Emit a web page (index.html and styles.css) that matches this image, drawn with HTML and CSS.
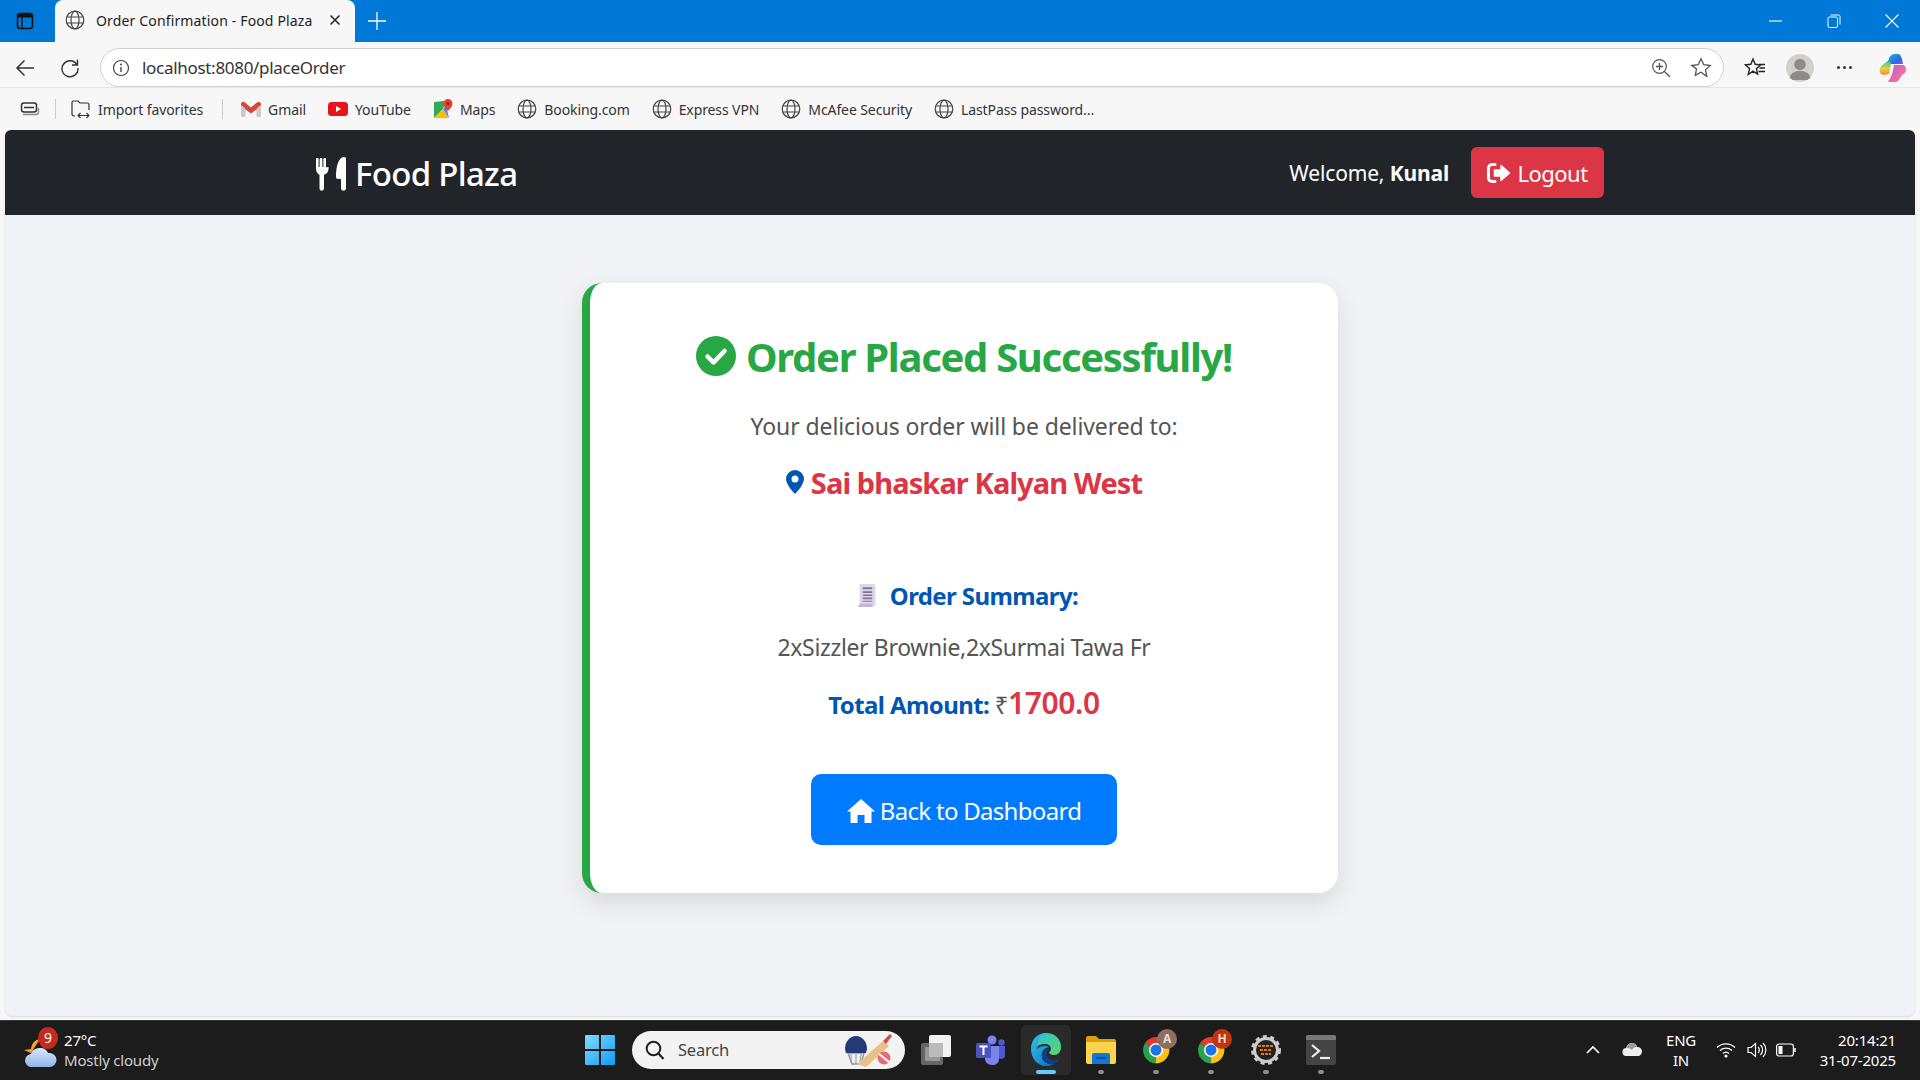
FILE: index.html
```html
<!DOCTYPE html>
<html lang="en">
  <head>
    <title>Order Confirmation - Food Plaza</title>
    <meta charset="utf-8">
    <link rel="stylesheet" href="styles.css">
  </head>

  <body>
    <svg class="defs" width="0" height="0">
      <defs>
        <symbol id="globe" viewBox="0 0 20 20">
          <g fill="none" stroke="#444" stroke-width="1.2">
            <circle cx="10" cy="10" r="8.8"/>
            <ellipse cx="10" cy="10" rx="4" ry="8.8"/>
            <path d="M1.6 7h16.8M1.6 13h16.8"/>
          </g>
        </symbol>
        <symbol id="chrome" viewBox="0 0 30 30">
          <path d="M15 15 L4 8 A13.5 13.5 0 0 1 27 9 L15 9Z" fill="#e33b2e"/>
          <path d="M15 15 L15 28.5 A13.5 13.5 0 0 0 27 9 L15 9Z" fill="#fbc116"/>
          <path d="M15 15 L4 8 A13.5 13.5 0 0 0 15 28.5Z" fill="#2ba14b"/>
          <circle cx="15" cy="15" r="7" fill="#fff"/>
          <circle cx="15" cy="15" r="5.5" fill="#1a73e8"/>
        </symbol>
      </defs>
    </svg>

    <div class="tabstrip">
      <button class="strip-btn">
        <svg width="18" height="18" viewBox="0 0 18 18"><rect x="1.5" y="1.5" width="15" height="15" rx="2.5" fill="none" stroke="#111" stroke-width="1.6"/><path d="M2 2h14v3.5H2z" fill="#111"/><path d="M6 5v11" stroke="#111" stroke-width="1.4"/></svg>
      </button>
      <div class="tab">
        <svg width="20" height="20"><use href="#globe"/></svg>
        <span class="tab-title">Order Confirmation - Food Plaza</span>
        <svg class="tab-close" width="12" height="12" viewBox="0 0 12 12"><path d="M1.5 1.5l9 9M10.5 1.5l-9 9" stroke="#222" stroke-width="1.5"/></svg>
      </div>
      <svg class="new-tab" width="18" height="18" viewBox="0 0 18 18"><path d="M9 0v18M0 9h18" stroke="#fff" stroke-width="1.3"/></svg>
      <div class="win-controls">
        <svg width="14" height="14" viewBox="0 0 14 14"><path d="M0 7h13" stroke="#fff" stroke-width="1.1"/></svg>
        <svg width="14" height="14" viewBox="0 0 14 14"><rect x="1" y="3" width="9.5" height="10.5" rx="1.5" fill="none" stroke="#fff"/><path d="M3.5 1h8a1.5 1.5 0 0 1 1.500 1.500v8" fill="none" stroke="#fff"/></svg>
        <svg width="14" height="14" viewBox="0 0 14 14"><path d="M.5.5l13 13M13.500.5l-13 13" stroke="#fff" stroke-width="1.1"/></svg>
      </div>
    </div>

    <div class="toolbar">
      <svg class="tool-back" width="20" height="18" viewBox="0 0 20 18"><path d="M19 9H2M9.500 1.500L2 9l7.500 7.500" fill="none" stroke="#333" stroke-width="1.5"/></svg>
      <svg class="tool-reload" width="20" height="20" viewBox="0 0 20 20"><path d="M16.800 6.500A8 8 0 1 0 18 10M17.500 1.500v5.500h-5.500" fill="none" stroke="#333" stroke-width="1.400"/></svg>
      <div class="addressbar">
        <svg width="18" height="18" viewBox="0 0 18 18"><circle cx="9" cy="9" r="7.500" fill="none" stroke="#444" stroke-width="1.200"/><path d="M9 8v5" stroke="#444" stroke-width="1.400"/><circle cx="9" cy="5.500" r="1" fill="#444"/></svg>
        <span class="url">localhost:8080/placeOrder</span>
        <svg class="zoom-icon" width="20" height="20" viewBox="0 0 20 20"><circle cx="8.500" cy="8.500" r="6.800" fill="none" stroke="#555" stroke-width="1.200"/><path d="M13.500 13.500L19 19M8.500 5v7M5 8.500h7" stroke="#555" stroke-width="1.300"/></svg>
        <svg class="star-icon" width="22" height="22" viewBox="0 0 22 22"><path d="M11 1.800l2.800 5.900 6.400.8-4.700 4.400 1.200 6.400L11 15.200l-5.700 3.100 1.200-6.400L1.800 8.500l6.400-.8z" fill="none" stroke="#555" stroke-width="1.300"/></svg>
      </div>
      <svg class="tool-favs" width="22" height="22" viewBox="0 0 22 22"><path d="M9 2l2.200 5.300 5.300.6-4 3.700 1.100 5.500L9 14.200l-4.700 3.300 1.200-5.900-4-3.700 5.300-.6z" fill="none" stroke="#222" stroke-width="1.400"/><path d="M15 7.500h6M15.500 11h5.500M14.500 14.500h6.500" stroke="#222" stroke-width="1.400"/></svg>
      <div class="avatar">
        <svg width="28" height="28" viewBox="0 0 28 28"><circle cx="14" cy="10.500" r="5.800" fill="#8e8c88"/><path d="M3.500 26c0-6.500 4.500-9 10.500-9s10.500 2.500 10.500 9z" fill="#8e8c88"/></svg>
      </div>
      <div class="more-dots"><i></i><i></i><i></i></div>
      <svg class="copilot" width="28" height="30" viewBox="0 0 28 30">
        <defs>
          <linearGradient id="cpA" x1="0" y1="0" x2="1" y2="1"><stop offset="0" stop-color="#19b5e8"/><stop offset=".6" stop-color="#2b6fe0"/><stop offset="1" stop-color="#7a4fd8"/></linearGradient>
          <linearGradient id="cpB" x1="0" y1="0" x2="0" y2="1"><stop offset="0" stop-color="#36c6a0"/><stop offset=".55" stop-color="#e9d03c"/><stop offset="1" stop-color="#f08a3c"/></linearGradient>
          <linearGradient id="cpC" x1="0" y1="0" x2="1" y2="1"><stop offset="0" stop-color="#b05fd8"/><stop offset=".6" stop-color="#ec6ba8"/><stop offset="1" stop-color="#f57a3c"/></linearGradient>
        </defs>
        <path d="M9 9c1-5 3-8 7-8h3c2 0 3 2 4 5l1 5H14c-3 0-5 0-5-2z" fill="url(#cpA)"/>
        <path d="M9 8L6 10C2 13 0 15 1 19c.5 2 2 3 4 3l5-1 2-10c0-2-2-3-3-3z" fill="url(#cpB)"/>
        <path d="M15 12h8c3 0 4 2 4 5 0 2-2 4-4 5l-4 6c-1 1-2 1-4 1h-5c-1 0-1-1 0-2 3-3 4-10 5-15z" fill="url(#cpC)"/>
      </svg>
    </div>

    <div class="bookmarks">
      <svg class="bm-first" width="20" height="18" viewBox="0 0 20 18"><rect x="1.500" y="3" width="15" height="9" rx="2.500" fill="none" stroke="#333" stroke-width="1.500"/><path d="M4 7.500h10" stroke="#333" stroke-width="1.500"/><path d="M3 14.500h13a2.500 2.500 0 0 0 2.500-2.500V8" fill="none" stroke="#888" stroke-width="1.300"/></svg>
      <i class="bm-sep"></i>
      <div class="bm bm-import">
        <svg width="20" height="20" viewBox="0 0 20 20"><path d="M4 17H3a2 2 0 0 1-2-2V3.500A1.500 1.500 0 0 1 2.500 2H7l2 2h7a2 2 0 0 1 2 2v5" fill="none" stroke="#333" stroke-width="1.200"/><path d="M7 16.500h11M9.500 14l-2.500 2.500L9.500 19M15.500 14l2.500 2.500-2.500 2.500" fill="none" stroke="#333" stroke-width="1.100"/></svg>
        <span>Import favorites</span>
      </div>
      <i class="bm-sep bm-sep2"></i>
      <div class="bm bm-gmail">
        <svg width="20" height="16" viewBox="0 0 20 16"><path d="M1 15V3l9 7 9-7v12h-4V7l-5 4-5-4v8z" fill="#ddd"/><path d="M0 3.500C0 1 2.500 0 4 1.500l6 5 6-5C17.500 0 20 1 20 3.500V5l-10 7.500L0 5z" fill="#d8453b"/><path d="M0 4v10.500c0 .8.500 1.500 1.500 1.500H4V7z" fill="#c9c9c9"/><path d="M20 4v10.500c0 .8-.500 1.500-1.500 1.500H16V7z" fill="#c9c9c9"/></svg>
        <span>Gmail</span>
      </div>
      <div class="bm">
        <svg width="20" height="14" viewBox="0 0 20 14"><rect width="20" height="14" rx="3.500" fill="#e8141c"/><path d="M8 4l5.200 3L8 10z" fill="#fff"/></svg>
        <span>YouTube</span>
      </div>
      <div class="bm">
        <svg width="20" height="20" viewBox="0 0 20 20"><path d="M1 3l9-1v8l-9 9z" fill="#34a853"/><path d="M1 19l9-9 6 9z" fill="#fbbc04"/><path d="M10 2l3 0-3 8z" fill="#4285f4"/><path d="M10 10l3-3 3 12z" fill="#4285f4"/><path d="M15 0a4.500 4.500 0 0 1 4.500 4.500C19.500 8 15 12 15 12s-4.500-4-4.500-7.500A4.500 4.500 0 0 1 15 0z" fill="#e5412f"/><circle cx="15" cy="4.500" r="1.500" fill="#8c2218"/></svg>
        <span>Maps</span>
      </div>
      <div class="bm"><svg width="20" height="20"><use href="#globe"/></svg><span>Booking.com</span></div>
      <div class="bm"><svg width="20" height="20"><use href="#globe"/></svg><span>Express VPN</span></div>
      <div class="bm"><svg width="20" height="20"><use href="#globe"/></svg><span>McAfee Security</span></div>
      <div class="bm"><svg width="20" height="20"><use href="#globe"/></svg><span>LastPass password...</span></div>
    </div>

    <div class="page">
      <nav class="navbar">
        <div class="nav-inner">
          <a class="brand">
            <svg width="30" height="34" viewBox="0 0 30 34"><path d="M0 2c0-1.500 2.600-1.500 2.600 0v8h1V2c0-1.500 2.800-1.500 2.800 0v8h1V2c0-1.500 2.600-1.500 2.600 0v2h.000v6c0 1 2.500 0 2.500 0v2c0 3-2 5-4.500 5.700V31c0 3.500-4.500 3.500-4.500 0V17.700C2 17 0 15 0 12z" fill="#fff"/><path d="M30 1.500V31c0 3.500-5 3.500-5 0v-9h-3c-1.200 0-2-.7-2-2C20 10 22 1 27.500 0 29 -.2 30 .5 30 1.500z" fill="#fff"/></svg>
            <span>Food Plaza</span>
          </a>
          <div class="nav-right">
            <span class="welcome">Welcome, <b>Kunal</b></span>
            <a class="btn-logout">
              <svg width="24" height="20" viewBox="0 0 24 20"><path d="M8 1.500H5A3.500 3.500 0 0 0 1.500 5v10A3.500 3.500 0 0 0 5 18.500h3" fill="none" stroke="#fff" stroke-width="3" stroke-linecap="round"/><path d="M14 2.500l8.500 7.500L14 17.500V13H7.500V7H14z" fill="#fff" stroke="#fff" stroke-width="1.500" stroke-linejoin="round"/></svg>
              <span>Logout</span>
            </a>
          </div>
        </div>
      </nav>

      <main class="main">
        <section class="card">
          <h2 class="card-title">
            <svg width="40" height="40" viewBox="0 0 40 40"><circle cx="20" cy="20" r="20" fill="#28a745"/><path d="M11.500 20.500l6 6 11-11.500" fill="none" stroke="#fff" stroke-width="4.500" stroke-linecap="round" stroke-linejoin="round"/></svg>
            <span>Order Placed Successfully!</span>
          </h2>
          <p class="lead">Your delicious order will be delivered to:</p>
          <p class="address">
            <svg width="18" height="24" viewBox="0 0 18 24"><path fill-rule="evenodd" d="M9 0a9 9 0 0 1 9 9c0 4.500-5.500 11.500-9 15C5.500 20.500 0 13.500 0 9a9 9 0 0 1 9-9zm0 5.500a3.500 3.500 0 1 0 0 7 3.500 3.500 0 0 0 0-7z" fill="#0056b3"/></svg>
            <span>Sai bhaskar Kalyan West</span>
          </p>
          <p class="summary">
            <svg width="22" height="25" viewBox="0 0 20 24"><path d="M3 1h15v19c0 2-1 3-3 3H1c1-1 2-2 2-3z" fill="#dcd6e8"/><path d="M1 23c1-1 2-2 2-3h12c0 1 0 2-1 3z" fill="#c2b4dc"/><path d="M6 4h9v2H6zM6 8h9v1.500H6zM6 11h9v1.500H6zM6 14h9v1.500H6zM6 17h9v1H6z" fill="#7d7890"/></svg>
            <span>Order Summary:</span>
          </p>
          <p class="items">2xSizzler Brownie,2xSurmai Tawa Fr</p>
          <p class="total"><b>Total Amount:</b> <span class="rupee">₹</span><b class="amount">1700.0</b></p>
          <a class="btn-back">
            <svg width="28" height="24" viewBox="0 0 28 24"><path d="M14 0l14 12.500h-3.500V24h-7v-8h-7v8h-7V12.500H0z" fill="#fff"/></svg>
            <span>Back to Dashboard</span>
          </a>
        </section>
      </main>
    </div>

    <footer class="taskbar">
      <div class="weather">
        <svg width="34" height="38" viewBox="0 0 34 38">
          <defs><linearGradient id="cloud" x1="0" y1="0" x2="0" y2="1"><stop offset="0" stop-color="#dbe7fb"/><stop offset="1" stop-color="#8fb4e8"/></linearGradient></defs>
          <path d="M16 8a10 10 0 0 0-9 10l-7 1 7 3z" fill="#f0a22e"/>
          <path d="M8 36a6.500 6.500 0 0 1-1-13c1-4 5-6 9-6 4 0 7 2 8 5h1a7 7 0 0 1 1 14z" fill="url(#cloud)"/>
        </svg>
        <span class="weather-badge">9</span>
        <div class="weather-text">
          <span class="temp">27°C</span>
          <span class="cond">Mostly cloudy</span>
        </div>
      </div>

      <div class="task-center">
        <svg class="win-logo" width="30" height="30" viewBox="0 0 30 30">
          <defs><linearGradient id="winG" x1="0" y1="0" x2="1" y2="1"><stop offset="0" stop-color="#7fdcf7"/><stop offset="1" stop-color="#0f9cf5"/></linearGradient></defs>
          <path d="M0 1a1 1 0 0 1 1-1h13v14H0zM16 0h13a1 1 0 0 1 1 1v13H16zM0 16h14v14H1a1 1 0 0 1-1-1zM16 16h14v13a1 1 0 0 1-1 1H16z" fill="url(#winG)"/>
        </svg>
        <div class="search">
          <svg width="20" height="20" viewBox="0 0 20 20"><circle cx="8.500" cy="8.500" r="6.800" fill="none" stroke="#222" stroke-width="2"/><path d="M13.500 13.500L18.500 19" stroke="#222" stroke-width="2.200"/></svg>
          <span>Search</span>
          <svg class="search-art" width="50" height="34" viewBox="0 0 50 34">
            <path d="M5 20h16l-3 11H9z" fill="#eee" stroke="#999" stroke-width="1.500"/>
            <path d="M8 21v9M13 21v10M18 21l-1 9" stroke="#999"/>
            <path d="M2 16a11 13 0 0 1 22 0l-1 4H3z" fill="#243a78"/>
            <path d="M14 31L40 8l6 5-23 21z" fill="#e8c08a"/>
            <path d="M40 8l7-7 2 2-6 8z" fill="#d24a4a"/>
            <circle cx="41" cy="25" r="6.500" fill="#e86a78"/>
            <path d="M36 21l10 8" stroke="#fff" stroke-width="2"/>
          </svg>
        </div>
        <div class="task-icon">
          <svg width="30" height="30" viewBox="0 0 30 30"><rect y="8" width="22" height="22" rx="2" fill="#666"/><rect x="4" y="12" width="15" height="14" rx="1" fill="#999"/><rect x="8" width="22" height="22" rx="2" fill="#f2f2f2"/><rect x="8" y="8" width="14" height="14" fill="#bbb"/></svg>
        </div>
        <div class="task-icon">
          <svg width="30" height="30" viewBox="0 0 30 30"><circle cx="16" cy="5" r="4.500" fill="#7b83eb"/><circle cx="25.500" cy="7.500" r="3.200" fill="#5059c9"/><path d="M21 11h8v9c0 3-2 4-4 4-2 0-4-1-4-4z" fill="#5059c9"/><path d="M9 11h14v13c0 4-3 6-7 6s-7-3-7-6z" fill="#7b83eb"/><rect y="8" width="15" height="15" rx="1.500" fill="#4b53bc"/><path d="M3.500 11.500h8M7.500 11.500v8.500" stroke="#fff" stroke-width="2"/></svg>
        </div>
        <div class="task-icon task-active">
          <svg width="30" height="34" viewBox="0 0 30 34">
            <defs>
              <linearGradient id="edgeA" x1="0" y1="0" x2="1" y2="1"><stop offset="0" stop-color="#33c4e8"/><stop offset="1" stop-color="#0a6ec2"/></linearGradient>
              <linearGradient id="edgeB" x1="0" y1="0" x2="1" y2="1"><stop offset="0" stop-color="#2cc0d8"/><stop offset="1" stop-color="#5fd668"/></linearGradient>
            </defs>
            <path d="M15 0C7 0 0 6 0 16c0 9 6 17 15 17 3 0 6-1 8-2-6 1-11-2-12-7-1-5 2-9 7-10-2-2-8-2-12 2 1-8 8-11 14-9z" fill="url(#edgeA)"/>
            <path d="M15 0c9 0 15 6 15 14 0 5-3 8-7 8-3 0-5-1-5-3 3-1 3-7-3-8-4-.5-8 1-9 3C7 6 10 0 15 0z" fill="url(#edgeB)"/>
            <path d="M11 24c1 5 6 8 12 7 2-1 4-3 5-5-6 3-10 1-12-3-1-2-1-5 2-8-5 1-8 5-7 9z" fill="#0f3f8c"/>
          </svg>
          <i class="run run-active"></i>
        </div>
        <div class="task-icon">
          <svg width="30" height="28" viewBox="0 0 30 28"><path d="M0 2a2 2 0 0 1 2-2h8l3 3h15a2 2 0 0 1 2 2v4H0z" fill="#d9a10e"/><path d="M0 6h30v20a2 2 0 0 1-2 2H2a2 2 0 0 1-2-2z" fill="#ffd34d"/><path d="M6 19a2 2 0 0 1 2-2h14a2 2 0 0 1 2 2v9H6z" fill="#0f78d4"/><path d="M10 22h10" stroke="#0a4f96" stroke-width="2"/></svg>
          <i class="run"></i>
        </div>
        <div class="task-icon">
          <svg class="ic-chrome" width="30" height="30"><use href="#chrome"/></svg>
          <span class="chrome-badge badge-a">A</span>
          <i class="run"></i>
        </div>
        <div class="task-icon">
          <svg class="ic-chrome" width="30" height="30"><use href="#chrome"/></svg>
          <span class="chrome-badge badge-h">H</span>
          <i class="run"></i>
        </div>
        <div class="task-icon">
          <svg width="30" height="30" viewBox="0 0 30 30"><circle cx="15" cy="15" r="11.500" fill="#222" stroke="#ccc" stroke-width="3"/><circle cx="15" cy="15" r="13.500" fill="none" stroke="#ccc" stroke-width="3" stroke-dasharray="4 3.500"/><path d="M7 11h16M9 15h12M10 19h10" stroke="#e07b10" stroke-width="2" stroke-dasharray="3 1"/></svg>
          <i class="run"></i>
        </div>
        <div class="task-icon">
          <svg width="30" height="30" viewBox="0 0 30 30"><rect width="30" height="30" rx="2" fill="#444"/><path d="M0 2a2 2 0 0 1 2-2h26a2 2 0 0 1 2 2v3H0z" fill="#777"/><path d="M6 10l7 6-7 6" fill="none" stroke="#eee" stroke-width="2.200"/><path d="M14 23h10" stroke="#eee" stroke-width="2.200"/></svg>
          <i class="run"></i>
        </div>
      </div>

      <div class="tray">
        <svg class="tray-chevron" width="14" height="9" viewBox="0 0 14 9"><path d="M1 8l6-6 6 6" fill="none" stroke="#fff" stroke-width="1.600"/></svg>
        <svg class="tray-cloud" width="20" height="14" viewBox="0 0 20 14"><path d="M5 13a4 4 0 0 1-1-8c1-3 3-5 6-5 2.500 0 4.500 1.500 5 4 3 0 5 2 5 4.500 0 2.500-2 4.500-4 4.500z" fill="#eee"/><path d="M4 5c1-3 3-5 6-5 2.500 0 4.500 1.500 5 4-3 0-4 1-5 3-2-2-4-2-6-2z" fill="#9a9a9a"/></svg>
        <div class="lang"><span>ENG</span><span>IN</span></div>
        <svg class="tray-wifi" width="20" height="16" viewBox="0 0 20 16"><g fill="none" stroke="#fff" stroke-width="1.300"><path d="M1 5.500a13 13 0 0 1 18 0"/><path d="M4 8.500a9 9 0 0 1 12 0"/><path d="M7 11.500a4.500 4.500 0 0 1 6 0"/></g><circle cx="10" cy="14" r="1.600" fill="#fff"/></svg>
        <svg class="tray-vol" width="20" height="16" viewBox="0 0 20 16"><g fill="none" stroke="#fff" stroke-width="1.200"><path d="M1 5.500h3L8.500 1.500v13L4 10.500H1z"/><path d="M11 5a4 4 0 0 1 0 6M13.500 3a7 7 0 0 1 0 10M16 1a10 10 0 0 1 0 14"/></g></svg>
        <svg class="tray-batt" width="20" height="14" viewBox="0 0 20 14"><rect x=".6" y="1" width="16.800" height="12" rx="2.500" fill="none" stroke="#fff" stroke-width="1.200"/><rect x="2.500" y="3" width="4" height="8" fill="#fff"/><path d="M19 5v4" stroke="#fff" stroke-width="1.500"/></svg>
        <div class="clock"><span>20:14:21</span><span>31-07-2025</span></div>
      </div>
    </footer>
  </body>
</html>
```

FILE: styles.css
```css
* {
  box-sizing: border-box;
}
html, body {
  height: 100vh;
  margin: 0;
  overflow: hidden;
}
body {
  display: flex;
  flex-direction: column;
  background: #f7f7f7;
  font-family: "Noto Sans", "Open Sans", sans-serif;
}
.defs {
  position: absolute;
}
p, h2 {
  margin: 0;
}

/* browser chrome */
.tabstrip {
  display: flex;
  align-items: center;
  height: 42px;
  flex: none;
  background: #0078d7;
}
.strip-btn {
  display: flex;
  justify-content: center;
  width: 55px;
  padding: 0 6px 0 0;
  background: none;
  border: none;
}
.tab {
  display: flex;
  align-items: center;
  align-self: stretch;
  width: 300px;
  padding: 0 14px 2px 10px;
  background: #f7f7f7;
  border-radius: 8px 8px 0 0;
  color: #222;
}
.tab-title {
  margin-left: 11px;
  font-size: 14px;
  letter-spacing: 0.15px;
  white-space: nowrap;
}
.tab-close {
  margin-left: auto;
}
.new-tab {
  margin-left: 13px;
}
.win-controls {
  display: flex;
  gap: 44px;
  margin-left: auto;
  margin-right: 21px;
}
.toolbar {
  display: flex;
  align-items: center;
  height: 46px;
  flex: none;
  padding-top: 6px;
  padding-left: 15px;
  border-bottom: 1px solid #e6e6e6;
}
.tool-reload {
  margin-left: 25px;
}
.addressbar {
  display: flex;
  align-items: center;
  width: 1624px;
  height: 39px;
  margin-left: 20px;
  padding: 0 11px 0 11px;
  background: #fff;
  border: 1px solid #cfcfcf;
  border-radius: 20px;
}
.url {
  margin-left: 12px;
  font-size: 17px;
  letter-spacing: -0.3px;
  color: #333;
}
.zoom-icon {
  margin-left: auto;
}
.star-icon {
  margin-left: 19px;
}
.tool-favs {
  margin-left: 20px;
}
.avatar {
  display: flex;
  justify-content: center;
  overflow: hidden;
  width: 28px;
  height: 28px;
  margin-left: 20px;
  background: #d2d0cb;
  border-radius: 50%;
}
.more-dots {
  display: flex;
  gap: 3px;
  margin-left: 23px;
}
.more-dots i {
  width: 3px;
  height: 3px;
  background: #333;
  border-radius: 50%;
}
.copilot {
  margin-left: 27px;
}
.bookmarks {
  display: flex;
  align-items: center;
  height: 42px;
  flex: none;
  padding-left: 20px;
  color: #333;
  font-size: 14px;
  letter-spacing: -0.1px;
}
.bm {
  display: flex;
  align-items: center;
  gap: 7px;
  margin-right: 22px;
  white-space: nowrap;
}
.bm-sep {
  width: 1px;
  height: 20px;
  margin: 0 15px;
  background: #ccc;
}
.bm-import {
  gap: 7px;
  margin-left: 0;
  margin-right: 0;
}
.bm-sep2 {
  margin: 0 18px 0 19px;
}

/* page */
.page {
  display: flex;
  flex-direction: column;
  flex: 1;
  min-height: 0;
  margin: 0 5px 4px;
  background: #f0f2f5;
  border-radius: 6px 6px 8px 8px;
  overflow: hidden;
  box-shadow: 0 1px 2px rgba(0, 0, 0, 0.12);
}
.navbar {
  height: 85px;
  flex: none;
  background: #212529;
  color: #fff;
}
.nav-inner {
  display: flex;
  align-items: center;
  justify-content: space-between;
  width: 1320px;
  height: 100%;
  margin: 0 auto;
  padding: 0 16px;
}
.brand {
  display: flex;
  align-items: center;
  gap: 9px;
  padding-top: 2px;
  font-size: 33px;
  font-weight: 500;
  letter-spacing: -0.7px;
}
.nav-right {
  display: flex;
  align-items: center;
  gap: 22px;
}
.welcome {
  font-size: 21px;
  letter-spacing: -0.15px;
}
.btn-logout {
  display: flex;
  align-items: center;
  justify-content: center;
  gap: 6px;
  width: 133px;
  height: 51px;
  background: #dc3545;
  border-radius: 6px;
  font-size: 22px;
  letter-spacing: -0.5px;
}
.main {
  display: flex;
  justify-content: center;
  flex: 1;
  padding-top: 68px;
}
.card {
  display: flex;
  flex-direction: column;
  align-items: center;
  width: 756px;
  height: 610px;
  padding-top: 48px;
  background: #fff;
  border-left: 8px solid #28a745;
  border-radius: 20px;
  box-shadow: 0 10px 25px rgba(0, 0, 0, 0.1);
}
.card-title {
  display: flex;
  align-items: center;
  gap: 10px;
  height: 50px;
  color: #28a745;
  font-size: 40px;
  font-weight: 700;
  letter-spacing: -1.3px;
  white-space: nowrap;
}
.lead {
  margin-top: 30px;
  height: 30px;
  line-height: 30px;
  color: #555;
  font-size: 23px;
  letter-spacing: -0.1px;
}
.address {
  display: flex;
  align-items: center;
  gap: 7px;
  height: 40px;
  margin-top: 21px;
  color: #dc3545;
  font-size: 29px;
  font-weight: 700;
  letter-spacing: -0.9px;
}
.summary {
  display: flex;
  align-items: center;
  gap: 12px;
  height: 34px;
  margin-top: 76px;
  padding-left: 6px;
  color: #0056b3;
  font-size: 24px;
  font-weight: 700;
  letter-spacing: -0.6px;
}
.items {
  height: 30px;
  line-height: 30px;
  margin-top: 20px;
  color: #555;
  font-size: 23px;
  letter-spacing: -0.35px;
}
.total {
  height: 40px;
  line-height: 40px;
  margin-top: 21px;
  color: #0056b3;
  font-size: 24px;
  letter-spacing: -0.6px;
}
.rupee {
  color: #555;
}
.total .amount {
  color: #dc3545;
  font-size: 30px;
  font-weight: 600;
  letter-spacing: -0.4px;
}
.btn-back {
  display: flex;
  align-items: center;
  justify-content: center;
  gap: 5px;
  width: 306px;
  height: 71px;
  margin-top: 51px;
  padding-top: 2px;
  background: #007bff;
  border-radius: 10px;
  color: #fff;
  font-size: 24px;
  letter-spacing: -0.7px;
}

/* windows taskbar */
.taskbar {
  display: flex;
  align-items: center;
  height: 60px;
  flex: none;
  padding-bottom: 2px;
  background: #1c1c1c;
  border-top: 1px solid #3a3a3a;
  color: #fff;
  font-size: 15px;
  letter-spacing: -0.2px;
}
.weather {
  position: relative;
  display: flex;
  align-items: center;
  width: 585px;
  padding-left: 24px;
}
.weather-badge {
  position: absolute;
  left: 38px;
  top: -3px;
  width: 20px;
  height: 22px;
  background: #c42b1c;
  border-radius: 50%;
  font-size: 14px;
  line-height: 22px;
  text-align: center;
}
.weather-text {
  display: flex;
  flex-direction: column;
  margin-left: 6px;
  line-height: 20px;
}
.cond {
  color: #cfcfcf;
}
.task-center {
  display: flex;
  align-items: center;
}
.win-logo {
  flex: none;
}
.search {
  display: flex;
  align-items: center;
  width: 273px;
  height: 38px;
  margin-left: 17px;
  margin-right: 6px;
  padding-left: 13px;
  background: #f3f3f3;
  border-radius: 19px;
  color: #444;
  font-size: 16.5px;
}
.search span {
  margin-left: 13px;
}
.search-art {
  margin-left: auto;
  margin-right: 12px;
}
.task-icon {
  position: relative;
  display: flex;
  align-items: center;
  justify-content: center;
  width: 50px;
  height: 50px;
  margin-right: 5px;
  border-radius: 5px;
}
.task-active {
  background: #2a2a2a;
}
.run {
  position: absolute;
  bottom: 1px;
  left: 50%;
  width: 6px;
  height: 4px;
  margin-left: -3px;
  background: #8c8c8c;
  border-radius: 2px;
}
.run-active {
  width: 20px;
  margin-left: -10px;
  background: #60cdff;
}
.chrome-badge {
  position: absolute;
  top: 4px;
  right: 4px;
  width: 20px;
  height: 20px;
  border-radius: 50%;
  font-size: 12px;
  font-weight: 700;
  line-height: 20px;
  text-align: center;
}
.badge-a {
  background: #8d6e63;
  color: #e6dcd8;
}
.badge-h {
  background: #bf360c;
  color: #f6d8cc;
}
.tray {
  display: flex;
  align-items: center;
  flex: 1;
}
.tray-chevron {
  margin-left: 235px;
}
.tray-cloud {
  margin-left: 22px;
}
.lang {
  display: flex;
  flex-direction: column;
  align-items: center;
  margin-left: 24px;
  line-height: 20px;
}
.tray-wifi {
  margin-left: 20px;
}
.tray-vol {
  margin-left: 11px;
}
.tray-batt {
  margin-left: 9px;
}
.clock {
  display: flex;
  flex-direction: column;
  align-items: flex-end;
  margin-left: auto;
  margin-right: 24px;
  line-height: 20px;
}
```
